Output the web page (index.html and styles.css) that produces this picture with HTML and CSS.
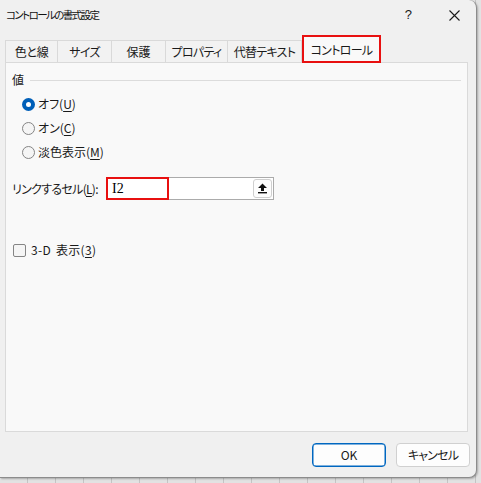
FILE: index.html
```html
<!DOCTYPE html>
<html lang="ja">
<head>
<meta charset="utf-8">
<title>コントロールの書式設定</title>
<link rel="stylesheet" href="styles.css">
</head>
<body>
<div class="desk">
  <div class="dialog">
    <div class="titlebar">
      <span class="title">コントロールの書式設定</span>
      <span class="help">?</span>
      <svg class="close" width="11" height="11" viewBox="0 0 11 11"><path d="M0.5 0.5 L10.5 10.5 M10.5 0.5 L0.5 10.5" stroke="#1a1a1a" stroke-width="1.1" fill="none"/></svg>
    </div>
    <div class="tabs">
      <div class="tab t1">色と線</div>
      <div class="tab t2">サイズ</div>
      <div class="tab t3">保護</div>
      <div class="tab t4">プロパティ</div>
      <div class="tab t5">代替テキスト</div>
      <div class="tab active">コントロール</div>
    </div>
    <div class="panel">
      <div class="group-head"><span>値</span><span class="rule"></span></div>
      <div class="radio-row"><span class="radio on"></span><span>オフ(<u>U</u>)</span></div>
      <div class="radio-row"><span class="radio"></span><span>オン(<u>C</u>)</span></div>
      <div class="radio-row"><span class="radio"></span><span>淡色表示(<u>M</u>)</span></div>
      <div class="link-row">
        <span class="link-label">リンクするセル(<u>L</u>):</span>
        <div class="ref-input">
          <span class="ref-value">I2</span>
          <span class="mark"></span>
          <span class="ref-btn"><svg width="11" height="11" viewBox="0 0 11 11"><path d="M5.5 0.5 L10 5 L7 5 L7 8 L4 8 L4 5 L1 5 Z" fill="#111"/><rect x="1" y="9" width="9" height="1.4" fill="#111"/></svg></span>
        </div>
      </div>
      <div class="check-row"><span class="check"></span><span class="check-label">3-D 表示(<u>3</u>)</span></div>
    </div>
    <div class="footer">
      <button class="btn primary">OK</button>
      <button class="btn cancel">キャンセル</button>
    </div>
  </div>
</div>
</body>
</html>
```
FILE: styles.css
```css
* { box-sizing: border-box; }
html, body { margin: 0; padding: 0; }
body {
  width: 481px;
  height: 483px;
  overflow: hidden;
  background: #dedede;
  font-family: "Noto Sans CJK JP", "Noto Sans", sans-serif;
  font-feature-settings: "palt";
  font-size: 12px;
  color: #1a1a1a;
  white-space: nowrap;
}
.desk {
  width: 481px;
  height: 483px;
  background:
    repeating-linear-gradient(90deg, transparent 0 27px, #c4c4c4 27px 28px),
    #e2e2e2;
}
.dialog {
  width: 477px;
  height: 478px;
  background: #f0f0f0;
  border-right: 1px solid #8c8c8c;
  border-bottom: 1px solid #8c8c8c;
  border-radius: 0 8px 8px 0;
  display: flex;
  flex-direction: column;
  box-shadow: 1px 1px 2px rgba(0,0,0,0.25);
}
.titlebar {
  height: 30px;
  display: flex;
  align-items: center;
  padding-left: 6px;
  line-height: 16px;
}
.title { font-size: 10.5px; letter-spacing: -1.6px; color: #111; }
.help { margin-left: auto; font-family: "Liberation Sans", sans-serif; font-size: 13px; margin-right: 37px; }
.close { margin-right: 16px; }
.tabs {
  margin-top: 5px;
  height: 27px;
  display: flex;
  align-items: flex-end;
  padding-left: 5px;
  letter-spacing: -0.7px;
}
.tab {
  height: 22px;
  display: flex;
  align-items: center;
  justify-content: center;
  background: #f2f2f2;
  border-top: 1px solid #d9d9d9;
  border-left: 1px solid #d9d9d9;
  line-height: 16px;
  font-size: 12px;
}
.t1 { width: 52px; letter-spacing: -0.3px; }
.t2 { width: 54px; }
.t3 { width: 54px; letter-spacing: 0; }
.t4 { width: 62px; }
.t5 { width: 75px; border-right: 1px solid #d9d9d9; }
.tab.active {
  width: 79px;
  height: 28px;
  margin-bottom: -1px;
  background: #f9f9f9;
  border: 2px solid #e81010;
  position: relative;
  z-index: 1;
  padding-top: 1px;
}
.panel {
  margin-left: 5px;
  width: 463px;
  height: 370px;
  background: #f9f9f9;
  border: 1px solid #dadada;
  padding: 9px 6px 0;
  display: flex;
  flex-direction: column;
}
.group-head {
  height: 16px;
  display: flex;
  align-items: center;
  line-height: 16px;
}
.rule {
  flex: 1;
  margin-left: 6px;
  border-top: 1px solid #dcdcdc;
}
.radio-row {
  height: 24px;
  display: flex;
  align-items: center;
  padding-left: 10px;
  line-height: 16px;
}
.group-head + .radio-row { margin-top: 4px; }
.radio {
  width: 13px;
  height: 13px;
  border-radius: 50%;
  border: 1px solid #858585;
  background: #f5f5f5;
  margin-right: 3px;
  display: flex;
  align-items: center;
  justify-content: center;
}
.radio.on {
  border: none;
  background: #005fb8;
}
.radio.on::after {
  content: "";
  width: 5px;
  height: 5px;
  border-radius: 50%;
  background: #fff;
}
u { text-decoration-thickness: 1px; text-underline-offset: 2px; }
.link-row {
  margin-top: 13px;
  height: 23px;
  display: flex;
  align-items: center;
  line-height: 16px;
}
.link-label { width: 94px; flex: none; letter-spacing: -0.7px; }
.ref-input {
  position: relative;
  width: 168px;
  height: 23px;
  background: #fff;
  border: 1px solid #ababab;
  display: flex;
  align-items: center;
  padding-left: 5px;
}
.ref-value {
  font-family: "Liberation Serif", serif;
  font-size: 14px;
  color: #000;
}
.mark {
  position: absolute;
  left: -1px;
  top: -1px;
  width: 63px;
  height: 23px;
  border: 2px solid #e81010;
}
.ref-btn {
  margin-left: auto;
  margin-right: 1px;
  width: 19px;
  height: 19px;
  border: 1px solid #cfcfcf;
  border-radius: 3px;
  background: #fdfdfd;
  display: flex;
  align-items: center;
  justify-content: center;
}
.check-row {
  margin-top: 38px;
  height: 24px;
  display: flex;
  align-items: center;
  padding-left: 1px;
  line-height: 16px;
}
.check {
  width: 13px;
  height: 13px;
  border: 1px solid #858585;
  border-radius: 2px;
  background: #f5f5f5;
  margin-right: 5px;
}
.check-label { letter-spacing: 0.3px; word-spacing: 2px; }
.footer {
  margin-top: 11px;
  display: flex;
  justify-content: flex-end;
  gap: 10px;
  padding-right: 6px;
}
.btn {
  width: 74px;
  height: 24px;
  border: 1px solid #d0d0d0;
  border-radius: 4px;
  background: #fdfdfd;
  font-family: "Noto Sans CJK JP", "Noto Sans", sans-serif;
  font-feature-settings: "palt";
  font-size: 12px;
  color: #1a1a1a;
  padding: 0;
  line-height: 16px;
}
.btn.cancel { letter-spacing: -0.8px; }
.btn.primary {
  border: 1px solid #0067c0;
  box-shadow: inset 0 0 0 0.5px #0067c0;
}
```
